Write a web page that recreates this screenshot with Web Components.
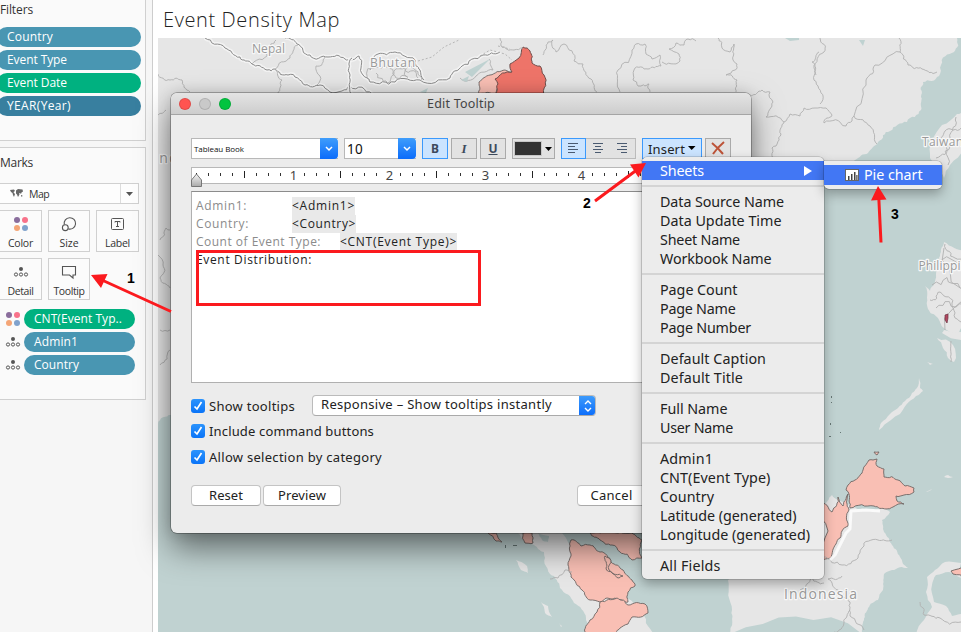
<!DOCTYPE html>
<html lang="en">
<head>
<meta charset="utf-8">
<title>Event Density Map</title>
<style>
html,body{margin:0;padding:0;width:961px;height:632px;overflow:hidden;background:#fff}
body{font-family:"Open Sans","Noto Sans",sans-serif;color:#333}
</style>
</head>
<body>
<workbook-app></workbook-app>
<script>
function define(name, html, setup){
  const t=document.createElement('template');
  t.innerHTML=html;
  customElements.define(name, class extends HTMLElement{
    constructor(){super();this.attachShadow({mode:'open'});}
    connectedCallback(){
      if(this.ready) return; this.ready=true;
      this.shadowRoot.appendChild(t.content.cloneNode(true));
      if(setup) setup(this,this.shadowRoot);
    }
  });
}

/* Text tracked to a given advance width */
define('fit-text','<style>:host{display:inline-block;white-space:pre}</style><slot></slot>',(el)=>{
  const w=+el.getAttribute('w');
  el.style.letterSpacing='0px';
  const n=el.textContent.length, nat=el.getBoundingClientRect().width;
  if(w&&n&&nat) el.style.letterSpacing=((w-nat)/n).toFixed(3)+'px';
});

/* ---------- side bar ---------- */
define('field-pill',`<style>
:host{display:flex;align-items:center;height:20px;border-radius:10px;background:var(--pill,#4996b2);color:#fff;font:12px/20px "Open Sans",sans-serif;box-sizing:border-box;padding-left:10px}
</style><slot></slot>`);

define('shelf-card',`<style>
:host{display:block;box-sizing:border-box;width:146px;border:1px solid #d0d0d0;border-left:0;background:#fafafa}
h2{margin:0;height:18px;font:12px/18px "Open Sans",sans-serif;color:#333}
</style><h2><slot name="title"></slot></h2><slot></slot>`);

const ICONS={
 color:'<svg width="16" height="16" viewBox="0 0 16 16"><circle cx="4" cy="4" r="3" fill="#8a6d9c"/><circle cx="12" cy="4" r="3" fill="#f8728a"/><circle cx="4" cy="12" r="3" fill="#f4a576"/><circle cx="12" cy="12" r="3" fill="#80a2cc"/></svg>',
 size:'<svg width="16" height="16" viewBox="0 0 16 16" fill="none" stroke="#555" stroke-width="1.1"><path d="M3.300 8.600A5.700 5.700 0 1 1 7.400 12.900"/><circle cx="4.300" cy="11.700" r="2.900"/></svg>',
 label:'<svg width="14" height="16" viewBox="0 0 14 16" fill="none" stroke="#555"><rect x=".5" y="2.500" width="12" height="11" rx="1"/><path d="M4 6.500V5.500h5v1M6.500 5.500v5M5 10.500h3"/></svg>',
 detail:'<svg width="16" height="16" viewBox="0 0 16 16"><circle cx="8" cy="5" r="2" fill="#555"/><g fill="none" stroke="#555"><circle cx="3" cy="10.500" r="1.600"/><circle cx="8" cy="10.500" r="1.600"/><circle cx="13" cy="10.500" r="1.600"/></g></svg>',
 tooltip:'<svg width="16" height="16" viewBox="0 0 16 16" fill="none" stroke="#555" stroke-width="1.1"><path d="M1.500 2.500h13v8.500h-2.500v3l-3.500-3h-7z"/></svg>'
};
define('mark-icon','<style>:host{display:block;line-height:0}</style>',(el,r)=>{r.innerHTML+=ICONS[el.getAttribute('kind')];});
define('mark-button',`<style>
:host{display:flex;flex-direction:column;align-items:center;box-sizing:border-box;height:42px;border:1px solid #d0d0d0;background:#fbfbfb;font:10.500px/14px "Open Sans",sans-serif;color:#333;padding-top:5px;gap:4px}
</style><slot name="icon"></slot><slot></slot>`);

define('side-bar',`<style>
:host{display:flex;flex-direction:column;gap:6px;box-sizing:border-box;width:153px;height:632px;border-right:1px solid #cdcdcd;background:#f6f6f6;overflow:hidden}
.filters{height:141px;border-top:0;padding-top:1px}
.pills{display:flex;flex-direction:column;gap:3px;margin:8px 0 0 -3px;width:144px}
.marks{height:253px;padding-top:6px}
.select{display:flex;box-sizing:border-box;width:139px;height:21px;margin-top:11px;border:1px solid #d0d0d0;border-left:0;align-items:center;font-size:10.500px;background:#fdfdfd}
.select svg.g{margin:0 6px 0 10px}
.select i{margin-left:auto;width:17px;height:19px;border-left:1px solid #dcdcdc;display:flex;align-items:center;justify-content:center}
.grid{display:grid;grid-template-columns:43px 42px 43px;column-gap:6px;row-gap:6px;margin:6px 0 0 -1px}
.rows{display:flex;flex-direction:column;gap:3px;margin-top:9px}
.row{display:grid;grid-template-columns:18px 111px;padding-left:5px;column-gap:1px;align-items:center}
</style>
<shelf-card class="filters"><fit-text w="33" slot="title">Filters</fit-text>
 <div class="pills">
 <field-pill><fit-text w="46">Country</fit-text></field-pill>
 <field-pill><fit-text w="60">Event Type</fit-text></field-pill>
 <field-pill style="--pill:#00b180"><fit-text w="60">Event Date</fit-text></field-pill>
 <field-pill style="--pill:#387f9f"><fit-text w="64">YEAR(Year)</fit-text></field-pill>
 </div></shelf-card>
<shelf-card class="marks"><fit-text w="33" slot="title">Marks</fit-text>
 <div class="select"><svg class="g" width="13" height="9" viewBox="0 0 13 9" fill="#666"><path d="M0 1l4-.5 1 1.500-1.500 1 .5 1 1 1-1 3-1-2-.5-2L1 3z M6 1.500L8 0l4.500.5.500 2-1.500 1-.5 1.500-1-1-1 .5.5 1-1.500 2.500-1-2.500-1-1z M11 6l1.500.5-.5 1.500-1-1z"/></svg><fit-text w="20">Map</fit-text><i><svg width="7" height="4"><path d="M0 0h7L3.500 4z" fill="#555"/></svg></i></div>
 <div class="grid">
 <mark-button><mark-icon slot="icon" kind="color"></mark-icon><fit-text w="25">Color</fit-text></mark-button>
 <mark-button><mark-icon slot="icon" kind="size"></mark-icon><fit-text w="19">Size</fit-text></mark-button>
 <mark-button><mark-icon slot="icon" kind="label"></mark-icon><fit-text w="25">Label</fit-text></mark-button>
 <mark-button><mark-icon slot="icon" kind="detail"></mark-icon><fit-text w="26">Detail</fit-text></mark-button>
 <mark-button><mark-icon slot="icon" kind="tooltip"></mark-icon><fit-text w="31">Tooltip</fit-text></mark-button>
 </div>
 <div class="rows">
 <div class="row"><mark-icon kind="color"></mark-icon><field-pill style="--pill:#00b180"><fit-text w="88">CNT(Event Typ..</fit-text></field-pill></div>
 <div class="row"><mark-icon kind="detail"></mark-icon><field-pill><fit-text w="44">Admin1</fit-text></field-pill></div>
 <div class="row"><mark-icon kind="detail"></mark-icon><field-pill><fit-text w="45">Country</fit-text></field-pill></div>
 </div></shelf-card>`);

/* ---------- map ---------- */
let seed=7;
const rnd=()=>{seed=(seed*16807)%2147483647;return seed/2147483647-.5;};
/* Midpoint displacement gives coasts and borders their ragged edge */
function rough(str,amp=.22,depth=3,close=false){
  let p=str.trim().split(/\s+/).map(s=>s.split(',').map(Number));
  if(close)p.push(p[0]);
  for(let d=0;d<depth;d++){
    const q=[p[0]];
    for(let i=1;i<p.length;i++){
      const a=p[i-1],b=p[i],dx=b[0]-a[0],dy=b[1]-a[1];
      if(Math.hypot(dx,dy)>3){const k=rnd()*amp*2;q.push([(a[0]+b[0])/2-dy*k,(a[1]+b[1])/2+dx*k]);}
      q.push(b);
    }
    p=q;
  }
  return 'M'+p.map(v=>v[0].toFixed(1)+' '+v[1].toFixed(1)).join('L')+(close?'Z':'');
}
define('density-map',`<style>
:host{display:block;width:803px;height:594px;overflow:hidden;background:#c0d2d1}
svg{display:block}
.land{fill:#e6e6e6}
.border{fill:none;stroke:#b0b0b0;stroke-width:.9}
.nation{fill:none;stroke:#8c8c8c;stroke-width:1}
.halo{fill:none;stroke:#f3f3f3;stroke-width:4;stroke-linejoin:round}
.thin{stroke-width:3;stroke:#fafafa}
.hot{fill:#f9bfb4;stroke:#6f6664;stroke-width:.9}
.red{fill:#ee7469;stroke:#6f4f4c;stroke-width:1}
.water{fill:#bfd2d1}
text{font-family:"Open Sans",sans-serif;fill:#999;stroke:#f7f7f7;stroke-width:2.500px;paint-order:stroke;stroke-linejoin:round;font-weight:500}
</style><svg width="803" height="594" viewBox="158 38 803 594"></svg>`,(el,r)=>{
  const out=[];
  const add=(cls,s,amp,depth,close)=>out.push(`<path class="${cls}" d="${rough(s,amp,depth,close)}"/>`);
  const line=(s,amp)=>add('border',s,amp,3,false);
  const nation=s=>{const d=rough(s,.2,3);out.push(`<path class="halo" d="${d}"/><path class="nation" d="${d}"/>`);};
  out.push(`<path class="land" d="M158 38H957${rough('957,38 954,52 941,65 939,76 923,82 921,97 921,110 907,122 890,131 878,142 868,153 855,160 830,178 800,190 760,195 740,260 700,420 640,500 580,480 520,380 470,320 420,280 330,310 230,420 171,415 158,424',.2,4).replace('M','L')}Z"/>`);
  add('land','957,114 961,113 966,150 950,165 944,178 936,168 930,158 932,140 942,125',.1,2,true);
  add('land','944,242 966,250 966,325 955,335 944,328 937,317 928,309 925,286 930,291 936,275 939,258',.12,3,true);
  add('land','961,332 944,330 942,333 961,340',.1,1,true);
  add('land','937,338 953,345 954,362 948,358 943,348',.15,2,true);
  add('land','919,378 920,388 923,391 916,396 906,405 900,414 891,420 879,430 881,423 890,414 898,408 905,401 912,393 917,388',.1,2,true);
  add('land','927,362 933,364 930,365',.1,1,true);add('land','944,477 948,475 953,477 948,478',.1,1,true);add('land','926,492 932,489 929,491',.1,1,true);
  /* Borneo and Sulawesi */
  add('land','822,505 832,495 838,500 850,506 884,507 890,512 882,520 884,532 892,545 900,557 908,568 892,570 884,574 883,590 878,600 868,608 864,620 862,634 730,634 732,610 728,580 740,565',.14,3,true);
  add('land','961,563 945,562 935,570 927,577 926,592 932,607 924,620 916,634 966,634 966,615 952,616 946,606 934,602 932,585 936,575 949,572 961,578',.1,2,true);
  /* Sumatra and the peninsula */
  add('land','518,533 562,533 578,552 600,580 640,610 655,634 588,634 586,618 574,603 560,588 550,574 544,552 534,545',.13,3,true);
  add('land','516,560 527,566 528,573 521,570',.1,2,true);add('land','541,602 548,606 552,617 545,613',.1,2,true);add('land','559,623 562,626 561,627',.1,1,true);
  add('water','538,533 549,536 548,542 542,540',.1,2,true);
  add('hot','488,533 496,533 502,542 496,541',.12,2,true);
  add('hot','523,533 532,533 533,543 525,543',.15,2,true);
  add('hot','571,540 581,546 590,545 600,552 611,562 623,570 632,580 635,586 628,592 628,602 615,598 607,598 600,602 590,600 582,590 571,577 568,565 571,556',.16,3,true);
  add('hot','600,602 617,598 628,605 645,604 648,613 632,617 628,624 620,628 610,636 585,634 590,620 597,612',.14,3,true);
  add('hot','590,533 618,533 630,533 642,540 642,558 632,560 620,552 612,545 600,540',.16,3,true);
  add('hot','605,556 611,560 609,570 623,576 619,578 606,568',.2,3,true);
  add('hot','869,460 873,460 877,459 877,466 884,469 884,477 898,480 905,486 914,488 914,492 904,495 896,496 897,501 904,504 893,507 886,509 874,506 850,508 849,494 846,490 848,485 855,480 863,470',.14,3,true);
  add('hot','820,502 832,512 838,497 843,506 848,494 849,510 848,526 842,531 836,544 831,558 820,560',.14,3,true);
  add('hot','874,452 879,452 877,455',.1,2,true);
  add('hot','951,571 966,567 966,578 953,574',.1,2,true);
  /* north-east India */
  add('hot','478,94 479,82 490,75 505,70 513,72 505,76 499,85 496,94',.12,3,true);
  add('red','494,96 498,84 495,79 512,72 510,64 519,58 523,47 530,51 532,63 540,66 544,75 543,96',.15,3,true);
  nation('205,38 225,48 240,57 252,64 267,70 275,69 288,75 305,85 320,85 342,91 350,86 372,94');
  nation('285,38 297,44 310,55 328,57 345,59 359,56 363,75 370,82 395,82 420,80 450,78 462,66 483,55 500,52');
  nation('352,94 350,75 352,58');nation('370,70 378,54 395,52 415,60 420,70 424,80');
  line('158,74 170,80 182,80 190,92');line('158,115 166,110');line('252,64 268,50 276,40');line('275,69 290,58 298,45');line('275,69 282,80 278,94');
  line('317,85 320,76 316,66 325,57');
  line('370,80 384,66 396,78 411,66 422,80',.4);line('376,73 390,82 405,68 418,78',.4);
  line('460,78 476,76 493,70 489,59');
  out.push('<path class="border" stroke-dasharray="2 2" d="M418 61L432 57 444 47 459 40M480 56L490 50 505 54 512 60M498 46L510 49"/>');
  line('500,38 501,46 514,50 523,48');line('543,55 548,42 553,40 556,52 564,44 574,61 583,64 591,79 597,92');
  line('620,92 618,70 632,50 636,44 645,44 646,54 652,59 660,55 661,66 648,69 634,70 633,80 638,86 649,84 650,92');line('662,62 680,61 679,54 669,49 676,43 684,45 688,39 696,41');
  line('718,38 722,48 730,52 734,44 733,60 737,64 735,70 726,75 737,80 736,92');
  line('751,96 762,90 770,92 773,102 766,117 784,122 790,114 800,116 804,108 826,108 832,115 824,123 846,126 852,121 854,116 870,126 877,144');
  line('784,122 781,134 772,148 775,162');line('820,38 824,52 814,68 818,86 820,104');line('819,52 812,62 816,75');
  line('854,116 866,80 875,65 900,52 899,38');line('900,52 908,65 922,69 937,72');
  line('160,240 166,228 170,230');line('158,255 163,265 160,278 170,288');line('160,330 170,330');line('160,365 170,350');
  line('944,248 945,330',.25);line('932,285 960,288',.4);line('938,270 966,270',.4);line('936,308 964,304',.4);line('930,300 940,292 952,306 961,322',.3);line('945,244 955,258 966,260',.3);
  line('935,140 945,131 961,128',.25);line('936,158 948,145 961,140',.3);line('948,165 950,138 956,117');
  line('823,557 842,565 858,558 862,548 878,540 892,540');line('842,576 828,579 838,590 850,602 850,616 864,630');line('850,610 844,622 834,632');line('824,583 812,578 800,590');
  line('920,602 924,615 940,618 961,622');line('951,341 951,362',.1);
  out.push('<path class="halo thin" d="M830 560L835 555 840 545 846 533 850 529 851 511 866 510 880 511"/>');
  line('550,579 558,578 565,570 572,572');
  out.push('<path class="water" d="M461 80l8-4-2 6zM465 72l25-13-18 18zM420 92l8-4-2 5zM785 38h14v2l-9 1zM859 40h6l-2 6z"/>');
  out.push('<path fill="#b24861" stroke="#6b3440" stroke-width=".7" d="M945 315l3-1v4l-1 5-2-3z"/>');
  out.push('<path fill="#667775" d="M831 396h1v2h-1zM831 402h1v1h-1zM830 423h1v2h-1zM840 432h1v1h-1zM829 436h2v1h-2zM505 545h1v3h-1zM513 545h4v1h-4z"/>');
  out.push(`<text x="252" y="53" font-size="12" textLength="33">Nepal</text>
  <text x="370" y="67" font-size="12" textLength="45">Bhutan</text>
  <text x="922" y="146" font-size="12" textLength="41">Taiwan</text>
  <text x="918.500" y="270" font-size="12" textLength="62">Philippines</text>
  <text x="784" y="598.500" font-size="14" textLength="73">Indonesia</text>
  <text x="154" y="163" font-size="14" textLength="38">India</text>`);
  r.querySelector('svg').innerHTML=out.join('');
});

define('sheet-view',`<style>
:host{display:flex;flex-direction:column;box-sizing:border-box;flex:1;padding-left:5px;background:#fff;min-width:0}
h1{margin:0;height:38px;padding:0 0 0 5px;font:300 20px/40px "Open Sans",sans-serif;color:#222;box-sizing:border-box}
</style><h1><fit-text w="177">Event Density Map</fit-text></h1><density-map></density-map>`);

/* ---------- dialog parts ---------- */
define('tool-button',`<style>
:host{display:flex;align-items:center;justify-content:center;box-sizing:border-box;width:26px;height:21px;border:1px solid #aaa;background:#e2e2e2;color:#3d4a5c;font:bold 12px/18px "Noto Sans",sans-serif}
:host([on]){border-color:#3b99fc;background:#cbe4ff}
</style><slot></slot>`);
define('combo-box',`<style>
:host{display:flex;box-sizing:border-box;height:21px;border:1px solid #b8b8b8;border-right:0;background:#fff;align-items:center;padding-left:2px;color:#111}
i{margin:-1px 0 -1px auto;width:18px;height:21px;border-radius:0 4px 4px 0;background:linear-gradient(#3f9dfb,#0b6cfb);display:flex;align-items:center;justify-content:center}
</style><slot></slot><i><svg width="8" height="6" fill="none" stroke="#fff" stroke-width="1.500"><path d="M1 1l3 3 3-3"/></svg></i>`);
define('check-row',`<style>
:host{display:flex;align-items:center;gap:4px;height:14px;font:13px/14px "Noto Sans",sans-serif;color:#222}
i{width:14px;height:14px;border-radius:3px;background:linear-gradient(#2b93fc,#0a74f8);display:block}
svg{display:block}
</style><i><svg width="14" height="14" fill="none" stroke="#fff" stroke-width="1.700"><path d="M3.500 7.500L6 10l4.500-7"/></svg></i><slot></slot>`);
define('push-button',`<style>
:host{display:flex;align-items:center;justify-content:center;box-sizing:border-box;height:21px;border:1px solid #c4c4c4;border-bottom-color:#aaa;border-radius:4px;background:#fff;font:13px/17px "Noto Sans",sans-serif;color:#222;padding-bottom:1px}
</style><slot></slot>`);
define('tab-ruler',`<style>
:host{display:block;height:22px;width:540px}svg{display:block}
text{font:13px "Noto Sans",sans-serif;fill:#444;text-anchor:middle}
</style><svg width="540" height="22" viewBox="191 167 540 22"></svg>`,(el,r)=>{
  let s='<rect x="191.500" y="167.500" width="539" height="16" fill="#fff" stroke="#b8b8b8"/>';
  for(let i=0;i<45;i++){const x=196.500+i*12;
    if(i%8===0&&i)s+=`<text x="${x+.9}" y="180">${i/8}</text>`;
    else s+=i%8===4?`<path stroke="#222" d="M${x} 171v7"/>`:`<path stroke="#333" d="M${x} 173v3"/>`;}
  s+='<defs><linearGradient id="m" x2="0" y2="1"><stop stop-color="#f5f5f5"/><stop offset="1" stop-color="#aaa"/></linearGradient></defs><path d="M191.500 186.500v-6.500l5-6 5 6v6.500z" fill="url(#m)" stroke="#777"/>';
  r.querySelector('svg').innerHTML=s;
});
define('tooltip-editor',`<style>
:host{display:flex;flex-direction:column;box-sizing:border-box;width:540px;height:192px;border:1px solid #b0b0b0;border-top-color:#8c8c8c;background:#fff;padding:5px 0 0 4px;font:12px/18px "Open Sans",sans-serif;color:#8b8b8b}
.l{display:grid;grid-template-columns:96px auto;height:18px;justify-content:start}
.w{grid-template-columns:144px auto}
b{font-weight:500;color:#222;background:#e9e9e9;display:block;height:18px}
.e{color:#222;font-weight:500}
</style>
<div class="l"><span><fit-text w="51">Admin1:</fit-text></span><b><fit-text w="63">&lt;Admin1&gt;</fit-text></b></div>
<div class="l"><span><fit-text w="53">Country:</fit-text></span><b><fit-text w="64">&lt;Country&gt;</fit-text></b></div>
<div class="l w"><span><fit-text w="125">Count of Event Type:</fit-text></span><b><fit-text w="117">&lt;CNT(Event Type)&gt;</fit-text></b></div>
<div class="e"><fit-text w="116">Event Distribution:</fit-text></div>`);

define('tooltip-dialog',`<style>
:host{display:flex;flex-direction:column;box-sizing:border-box;width:580px;height:440px;border-radius:6px;background:#ececec;box-shadow:0 0 0 .7px rgba(0,0,0,.35),0 15px 32px rgba(0,0,0,.5),0 0 14px rgba(0,0,0,.12)}
header{display:grid;grid-template-columns:1fr auto 1fr;height:22px;box-sizing:border-box;border-bottom:1px solid #a5a5a5;border-radius:6px 6px 0 0;background:linear-gradient(#e4e4e4,#cdcdcd);align-items:center;padding:0 8px;font:12.500px/20px "Noto Sans",sans-serif;color:#444}
header fit-text{padding-top:1px}
.lights{display:flex;gap:8px}
.lights i{width:12px;height:12px;border-radius:50%;box-sizing:border-box;border:1px solid rgba(0,0,0,.12)}
.body{padding:23px 20px 0;display:flex;flex-direction:column}
.bar{display:flex;align-items:center;height:21px}
.al{display:flex}
.al tool-button{width:25px;border-left-width:0;border-right-width:0;border-color:#bbb}
.al tool-button[on]{border-width:1px;border-color:#3b99fc}
tool-button svg{margin-bottom:1px}
.al tool-button:last-child{border-right-width:1px}
tab-ruler{margin-top:8px}
tooltip-editor{margin-top:2px}
.opt{display:grid;grid-template-columns:121px 284px;align-items:center;margin-top:12px;height:21px}
.sel{display:flex;box-sizing:border-box;height:21px;border:1px solid #bbb;border-bottom-color:#aaa;border-radius:4px;background:#fff;font:13px/17px "Noto Sans",sans-serif;color:#222;padding-left:8px;overflow:hidden}
.sel i{margin:-1px -1px -1px auto;width:17px;height:21px;background:linear-gradient(#3f9dfb,#0b6cfb);display:flex;align-items:center;justify-content:center}
.foot{display:flex;gap:2px;margin-top:21px}
</style>
<header><span class="lights"><i style="background:#ff5450"></i><i style="background:#c9c9c9"></i><i style="background:#02c43f"></i></span><fit-text w="68">Edit Tooltip</fit-text><span></span></header>
<div class="body">
 <div class="bar">
  <combo-box style="width:147px"><fit-text w="50" style="font:8px 'Open Sans',sans-serif">Tableau Book</fit-text></combo-box>
  <combo-box style="width:72px;margin-left:6px"><fit-text w="16" style="font:13.500px 'Noto Sans',sans-serif">10</fit-text></combo-box>
  <tool-button on style="margin-left:6px">B</tool-button>
  <tool-button style="margin-left:3px"><span style="font:italic bold 13px 'Liberation Serif',serif">I</span></tool-button>
  <tool-button style="margin-left:3px"><u>U</u></tool-button>
  <tool-button style="width:43px;margin-left:6px"><svg width="39" height="15"><rect x=".5" y=".5" width="27" height="14" fill="#333" stroke="#c8c8c8"/><path d="M31 6h7l-3.500 4z" fill="#000"/></svg></tool-button>
  <div class="al" style="margin-left:6px">
   <tool-button on><svg width="12" height="10" stroke="#4a5a70"><path d="M0 .5h10M0 3.500h7M0 6.500h10M0 9.500h7"/></svg></tool-button>
   <tool-button><svg width="12" height="10" stroke="#4a5a70"><path d="M0 .5h10M2 3.500h6M0 6.500h10M2 9.500h6"/></svg></tool-button>
   <tool-button><svg width="12" height="10" stroke="#4a5a70"><path d="M0 .5h10M4 3.500h6M0 6.500h10M4 9.500h6"/></svg></tool-button>
  </div>
  <tool-button on style="width:60px;margin-left:6px;gap:3px;font-weight:400;font-size:13px;color:#222"><fit-text w="37">Insert</fit-text><svg width="8" height="4"><path d="M0 0h7.500L3.700 4z"/></svg></tool-button>
  <tool-button style="margin-left:3px"><svg width="14" height="14" fill="none" stroke="#bd5338" stroke-width="2"><path d="M1 2Q7 7 12 13M13 1Q6 7 2 13"/></svg></tool-button>
 </div>
 <tab-ruler></tab-ruler>
 <tooltip-editor></tooltip-editor>
 <div class="opt"><check-row><fit-text w="86">Show tooltips</fit-text></check-row><div class="sel"><fit-text w="231">Responsive – Show tooltips instantly</fit-text><i><svg width="8" height="12" fill="none" stroke="#fff" stroke-width="1.400"><path d="M1 4l3-3 3 3M1 8l3 3 3-3"/></svg></i></div></div>
 <check-row style="margin-top:8px"><fit-text w="165">Include command buttons</fit-text></check-row>
 <check-row style="margin-top:12px"><fit-text w="173">Allow selection by category</fit-text></check-row>
 <div class="foot"><push-button style="width:70px"><fit-text w="34">Reset</fit-text></push-button><push-button style="width:78px"><fit-text w="48">Preview</fit-text></push-button><push-button style="width:69px;margin-left:234px"><fit-text w="42">Cancel</fit-text></push-button></div>
</div>`);

/* ---------- menus ---------- */
define('menu-item',`<style>
:host{display:flex;align-items:center;box-sizing:border-box;height:19px;padding:0 12px 0 18px;color:#222;font:14.300px/19px "Noto Sans",sans-serif}
:host([hot]){background:#4277f4;color:#fff}
</style><slot></slot>`);
define('menu-rule',`<style>:host{display:flex;align-items:center;height:12px}:host::before{content:"";flex:1;height:2px;background:#d4d4d4}</style>`);
define('pop-menu',`<style>:host{display:flex;flex-direction:column;box-sizing:border-box;background:#ececec;border-radius:5px;padding:4px 0;box-shadow:0 0 0 .6px rgba(0,0,0,.25),0 5px 12px rgba(0,0,0,.3)}</style><slot></slot>`);
const groups=[[['Data Source Name',124],['Data Update Time',121.500],['Sheet Name',80],['Workbook Name',111.500]],
[['Page Count',77.500],['Page Name',75.500],['Page Number',91]],[['Default Caption',106],['Default Title',83]],
[['Full Name',67.500],['User Name',73]],[['Admin1',53],['CNT(Event Type)',110.500],['Country',54],['Latitude (generated)',136.500],['Longitude (generated)',150]],[['All Fields',60.500]]];
const menuHtml=groups.map(g=>'<menu-rule></menu-rule>'+g.map(([t,w])=>`<menu-item><fit-text w="${w}">${t}</fit-text></menu-item>`).join('')).join('');

define('callout-arrows',`<style>:host{display:block;pointer-events:none}svg{display:block}text{font:bold 14px "Liberation Sans",Arial,sans-serif;fill:#000}</style>
<svg width="961" height="632"><rect x="197.500" y="251.500" width="282" height="53" fill="none" stroke="#fb1a1e" stroke-width="3"/>
<g fill="#fb1a1e" stroke="#fb1a1e"><path stroke="none" d="M91 275L107.500 274 101 288zM646 163L630 164.500 638.500 177.500zM878 186L871 200.500 886.500 199.500z"/><path stroke-width="3" d="M103 280.500L171 311.500M636 170.500L595 201M878.800 198L881 242.500"/></g>
<text x="127" y="283">1</text><text x="583" y="208">2</text><text x="891" y="219">3</text></svg>`);

define('workbook-app',`<style>
:host{display:flex;position:relative;width:961px;height:632px;overflow:hidden}
tooltip-dialog{position:absolute;left:171px;top:93px}
.m1{position:absolute;left:642px;top:157px;width:182px;height:422px}
.m2{position:absolute;left:824px;top:161px;width:117.500px;height:28px;border-radius:0 5px 5px 5px}
callout-arrows{position:absolute;left:0;top:0}
.m1 .go{margin-left:auto}
</style>
<side-bar></side-bar><sheet-view></sheet-view>
<tooltip-dialog></tooltip-dialog>
<pop-menu class="m1"><menu-item hot><fit-text w="44">Sheets</fit-text><svg class="go" width="8" height="10"><path d="M0 0l8 5-8 5z" fill="#fff"/></svg></menu-item>${menuHtml}</pop-menu>
<pop-menu class="m2"><menu-item hot style="height:20px;line-height:18px;padding-left:21px;gap:5px"><svg width="14" height="12"><rect x=".5" y=".5" width="13" height="11" fill="#fff" stroke="#666"/><path d="M3 11V7h1.500v4zM6 11V5h1.500v6zM9 11V3h1.500v8zM11.300 11V6h1.200v5z" fill="#444"/></svg><fit-text w="58.500">Pie chart</fit-text></menu-item></pop-menu>
<callout-arrows></callout-arrows>`);
</script>
</body>
</html>
